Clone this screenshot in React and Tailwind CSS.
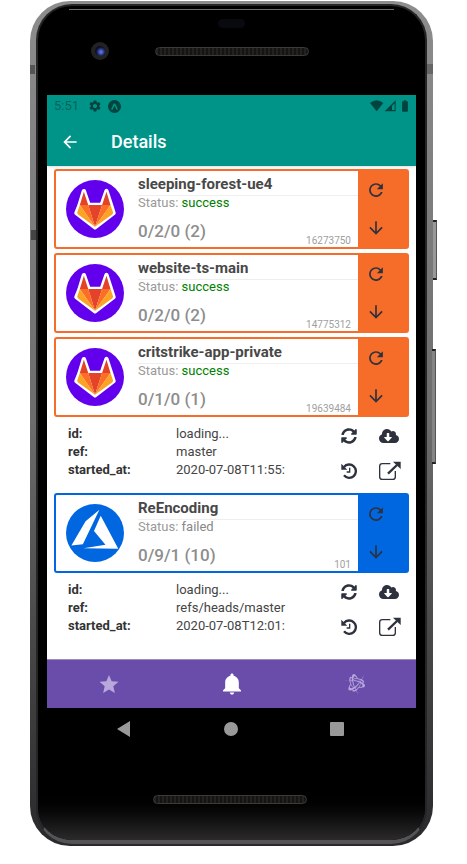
import React from "react";
import { IoMdRefresh, IoMdArrowDown, IoMdStar, IoMdNotifications } from "react-icons/io";
import { FaSyncAlt, FaCloudDownloadAlt, FaBattleNet } from "react-icons/fa";
import { MdSettings, MdArrowBack, MdBatteryFull } from "react-icons/md";

function GitlabLogo() {
  return (
    <svg viewBox="0 0 172 172" className="size-[58px] shrink-0" aria-hidden="true">
      <circle cx="86" cy="86" r="86" fill="#6200ee" />
      <path
        d="M53 33 L67 74 H106 L120 33 L134 76 L141 98 L86 140 L31 98 L40 76 Z"
        fill="#fff"
        stroke="#fff"
        strokeWidth="13"
        strokeLinejoin="round"
      />
      <path d="M53 35 L66 74 H41 Z M120 35 L107 74 H132 Z M66 74 H107 L86 139 Z" fill="#e24329" />
      <path d="M41 74 H66 L86 139 Z M132 74 H107 L86 139 Z" fill="#fc6d26" />
      <path d="M41 74 L33 97 L36 102 L86 139 Z M132 74 L140 97 L137 102 L86 139 Z" fill="#fca326" />
    </svg>
  );
}

function AzureLogo() {
  return (
    <svg viewBox="0 0 172 172" className="size-[58px] shrink-0" aria-hidden="true">
      <circle cx="86" cy="86" r="86" fill="#0067e0" />
      <path d="M99 17 L58 51 L16 123 L50 119 Z M103 35 L83 80 L117 121 L52 131 L155 133 Z" fill="#fff" />
    </svg>
  );
}

function HistoryIcon() {
  return (
    <svg viewBox="0 0 48 48" className="size-[16px]" fill="none" aria-hidden="true">
      <path d="M9 12 A20 20 0 1 1 9 37" stroke="#2d323e" strokeWidth="7" />
      <path d="M1 2 V20 H19 Z" fill="#2d323e" />
      <path d="M26 14 V27 H17" stroke="#2d323e" strokeWidth="4" />
    </svg>
  );
}

function OpenIcon() {
  return (
    <svg viewBox="0 0 66 58" className="h-[20px] w-[22px]" fill="none" aria-hidden="true">
      <path d="M34 7 H10 Q2 7 2 15 V46 Q2 54 10 54 H41 Q49 54 49 46 V29" stroke="#2d323e" strokeWidth="4" />
      <path d="M27 37 L54 11" stroke="#2d323e" strokeWidth="7" />
      <path d="M42 1 H65 V23 Z" fill="#2d323e" />
    </svg>
  );
}

function StatusBar() {
  return (
    <div className="flex h-[22px] items-center pl-[7px] pr-[4px] text-[#00443f]">
      <span className="w-[34px] text-[13px] leading-[22px] text-[#00665e]">5:51</span>
      <MdSettings className="size-[14px]" />
      <svg viewBox="0 0 26 26" className="ml-[6px] size-[13px]" aria-hidden="true">
        <circle cx="13" cy="13" r="13" fill="#00443f" />
        <path d="M6 19 L11.500 7 H14.500 L20 19 L17 19.500 L13 11 L9 19.500 Z" fill="#009488" />
      </svg>
      <svg viewBox="0 0 78 36" className="ml-auto h-[12px] w-[26px]" aria-hidden="true">
        <path d="M0 9 Q20 -7 40 9 L20 34 Z" fill="#00443f" />
        <path d="M44 34 L77 1 V34 Z M66 18 V30 H74 V10 Z" fill="#00443f" fillRule="evenodd" />
      </svg>
      <MdBatteryFull className="ml-[2px] size-[14px]" />
    </div>
  );
}

function PipelineCard({ name, status, ok, counts, id, azure }) {
  return (
    <article
      className={
        "flex h-[80px] overflow-hidden rounded-[3px] border-2 " +
        (azure ? "border-[#0067e0] bg-[#0067e0]" : "border-[#f66d29] bg-[#f66d29]")
      }
    >
      <div className="flex min-w-0 flex-1 bg-white pl-[10px]">
        <div className="flex items-center pr-[14px]">{azure ? <AzureLogo /> : <GitlabLogo />}</div>
        <div className="flex min-w-0 flex-1 flex-col">
          <h2 className="h-[25px] truncate border-b border-[#eeeeee] pt-[3px] text-[15px] leading-[20px] font-bold text-[#484848]">
            {name}
          </h2>
          <p className="h-[16px] text-[13px] leading-[14px] text-[#999999]">
            Status: <span className={ok ? "text-[#008000]" : "text-[#888888]"}>{status}</span>
          </p>
          <div className="flex flex-1 items-end justify-between pr-[7px]">
            <p className="pb-[4px] text-[17px] leading-[24px] font-medium text-[#8d8d8d]">{counts}</p>
            <p className="text-[10px] leading-[12px] text-[#a0a0a0]">{id}</p>
          </div>
        </div>
      </div>
      <div className="flex w-[49px] flex-col justify-between py-[9px] pl-[8px] text-[#2d323e]">
        <button type="button" aria-label={"Refresh " + name} className="size-[20px]">
          <IoMdRefresh className="size-[20px]" />
        </button>
        <button type="button" aria-label={"Expand " + name} className="size-[20px]">
          <IoMdArrowDown className="size-[20px]" />
        </button>
      </div>
    </article>
  );
}

function RunDetails({ branch, started }) {
  return (
    <section className="flex h-[72px] items-start justify-between pl-[14px] pr-[8px] pt-px">
      <dl className="grid grid-cols-[108px_auto] pt-[7px] text-[13px] leading-[18px] text-[#444444]">
        <dt className="font-bold text-[#333333]">id:</dt>
        <dd>loading...</dd>
        <dt className="font-bold text-[#333333]">ref:</dt>
        <dd>{branch}</dd>
        <dt className="font-bold text-[#333333]">started_at:</dt>
        <dd>{started}</dd>
      </dl>
      <div className="grid h-[70px] grid-cols-[38px_22px] grid-rows-2 items-center text-[#2d323e]">
        <button type="button" aria-label="Rerun"><FaSyncAlt className="size-[16px]" /></button>
        <button type="button" aria-label="Download"><FaCloudDownloadAlt className="size-[20px]" /></button>
        <button type="button" aria-label="History"><HistoryIcon /></button>
        <button type="button" aria-label="Open"><OpenIcon /></button>
      </div>
    </section>
  );
}

function Speaker() {
  return (
    <div className="h-[9px] rounded-full border border-[#3c3a38] bg-[repeating-linear-gradient(90deg,#242220_0px,#242220_2px,#151412_2px,#151412_4px)]" />
  );
}

export default function App() {
  return (
    <div className="bg-white pt-px pr-[34px] pb-[18px] pl-[30px] font-[Roboto,sans-serif]">
      <div className="relative rounded-[40px] bg-linear-to-b from-[#8d8d8d] via-[#6c6c6c] via-50% to-[#29282a] px-[6px] pt-[3px] pb-[2px]">
        <span className="absolute top-[64px] left-0 h-[9px] w-[5px] bg-[#555555]" />
        <span className="absolute top-[229px] left-px h-[10px] w-[5px] bg-[#444444]" />
        <span className="absolute top-[63px] right-0 h-[10px] w-[6px] bg-[#666666]" />
        <span className="absolute top-[219px] -right-[4px] h-[60px] w-[4px] border-y-2 border-r border-y-[#222222] border-r-[#555555] bg-[#999999]" />
        <span className="absolute top-[348px] -right-[3px] h-[115px] w-[4px] border-y-2 border-r border-y-[#222222] border-r-[#555555] bg-[#858585]" />
        <div className="overflow-hidden rounded-[36px] border-x-2 border-t-2 border-b-4 border-[#252525] border-b-[#555356] bg-black px-[9px]">
          <div className="h-[89px] pt-[3px]">
            <div className="mx-[22px] h-px bg-[#68706f]" />
            <div className="mx-auto mt-[9px] h-[9px] w-[27px] rounded-full bg-[#090a10]" />
            <div className="mt-[14px] grid grid-cols-[1fr_154px_1fr] items-center">
              <span className="ml-[44px] flex size-[18px] items-center justify-center rounded-full bg-[#222222]">
                <span className="size-[10px] rounded-full bg-[radial-gradient(circle_at_60%_60%,#6e84ea_0px,#29378c_3px,#0c0e24_5px)]" />
              </span>
              <Speaker />
            </div>
          </div>

          <div className="bg-white">
            <header className="bg-[#009488] shadow-sm">
              <StatusBar />
              <div className="flex h-[49px] items-center pl-[13px] text-white">
                <button type="button" aria-label="Back" className="mr-[31px]">
                  <MdArrowBack className="size-[20px]" />
                </button>
                <h1 className="text-[18px] leading-[24px] font-medium">Details</h1>
              </div>
            </header>

            <main className="flex h-[493px] flex-col gap-[4px] px-[7px] pt-[3px]">
              <PipelineCard name="sleeping-forest-ue4" status="success" ok counts="0/2/0 (2)" id="16273750" />
              <PipelineCard name="website-ts-main" status="success" ok counts="0/2/0 (2)" id="14775312" />
              <div>
                <PipelineCard name="critstrike-app-private" status="success" ok counts="0/1/0 (1)" id="19639484" />
                <RunDetails branch="master" started="2020-07-08T11:55:" />
              </div>
              <div>
                <PipelineCard name="ReEncoding" status="failed" counts="0/9/1 (10)" id="101" azure />
                <RunDetails branch="refs/heads/master" started="2020-07-08T12:01:" />
              </div>
            </main>

            <nav className="grid h-[49px] grid-cols-3 border-t border-[#9a8fb5] bg-[#6a4dab] text-[#b8a8dc]">
              <button type="button" aria-label="Favourites" className="flex items-center justify-center">
                <IoMdStar className="size-[24px]" />
              </button>
              <button type="button" aria-label="Notifications" className="flex items-center justify-center text-white">
                <IoMdNotifications className="size-[26px]" />
              </button>
              <button type="button" aria-label="Games" className="flex items-center justify-center">
                <FaBattleNet className="size-[20px]" />
              </button>
            </nav>
          </div>

          <div className="-mx-[9px] h-[132px] bg-linear-to-b from-black via-black via-60% to-[#2b2b2b]">
            <div className="flex h-[42px] items-center justify-between pr-[81px] pl-[79px]">
              <button type="button" aria-label="System back">
                <svg viewBox="0 0 14 16" className="h-[16px] w-[14px]" aria-hidden="true">
                  <path d="M0 8 L13 0 V16 Z" fill="#999" />
                </svg>
              </button>
              <button type="button" aria-label="Home" className="size-[14px] rounded-full bg-[#999999]" />
              <button type="button" aria-label="Recents" className="size-[14px] rounded-[1px] bg-[#999999]" />
            </div>
            <div className="pt-[45px] pr-[4px]">
              <div className="mx-auto w-[154px]">
                <Speaker />
              </div>
            </div>
          </div>
        </div>
      </div>
    </div>
  );
}
